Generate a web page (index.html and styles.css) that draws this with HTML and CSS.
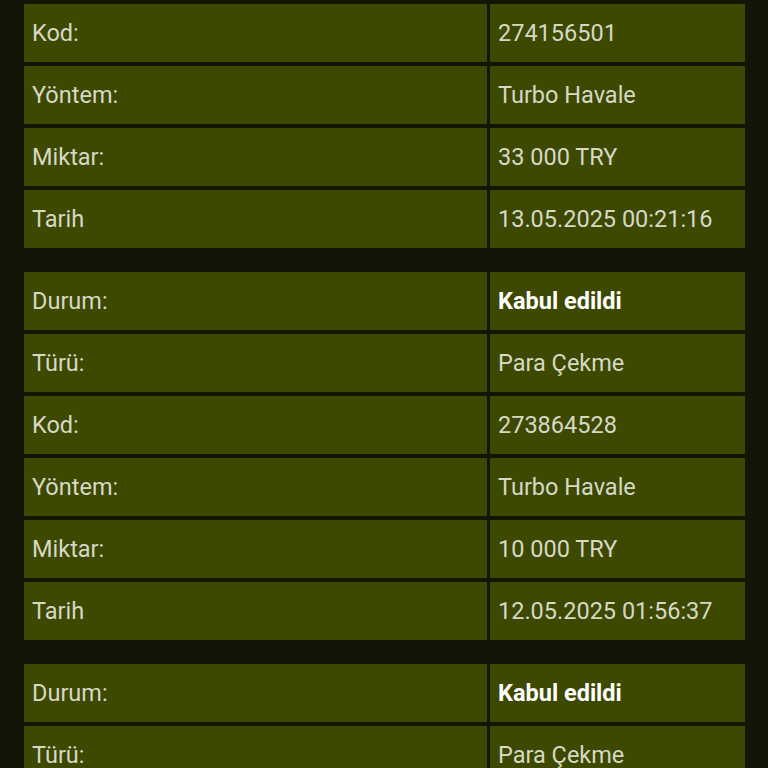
FILE: index.html
```html
<!DOCTYPE html>
<html>
<head>
<meta charset="utf-8">
<link rel="stylesheet" href="styles.css">
</head>
<body>
<div class="page">
  <div class="table">
    <div class="cell">Kod:</div><div class="cell">274156501</div>
    <div class="cell">Yöntem:</div><div class="cell">Turbo Havale</div>
    <div class="cell">Miktar:</div><div class="cell">33 000 TRY</div>
    <div class="cell">Tarih</div><div class="cell">13.05.2025 00:21:16</div>
  </div>
  <div class="table">
    <div class="cell">Durum:</div><div class="cell strong">Kabul edildi</div>
    <div class="cell">Türü:</div><div class="cell">Para Çekme</div>
    <div class="cell">Kod:</div><div class="cell">273864528</div>
    <div class="cell">Yöntem:</div><div class="cell">Turbo Havale</div>
    <div class="cell">Miktar:</div><div class="cell">10 000 TRY</div>
    <div class="cell">Tarih</div><div class="cell">12.05.2025 01:56:37</div>
  </div>
  <div class="table">
    <div class="cell">Durum:</div><div class="cell strong">Kabul edildi</div>
    <div class="cell">Türü:</div><div class="cell">Para Çekme</div>
  </div>
</div>
</body>
</html>
```
FILE: styles.css
```css
html, body {
  margin: 0;
  padding: 0;
  background: #121606;
  height: 768px;
  overflow: hidden;
}
.page {
  padding: 4px 23px 0 24px;
  display: flex;
  flex-direction: column;
  gap: 24px;
  font-family: Roboto, "Liberation Sans", sans-serif;
}
.table {
  display: grid;
  grid-template-columns: 463px 255px;
  column-gap: 3px;
  row-gap: 4px;
}
.cell {
  background: #3d4800;
  height: 58px;
  display: flex;
  align-items: center;
  padding-left: 8px;
  font-size: 23.5px;
  color: #d6d8c6;
}
.cell.strong {
  font-weight: bold;
  color: #ffffff;
}
```
